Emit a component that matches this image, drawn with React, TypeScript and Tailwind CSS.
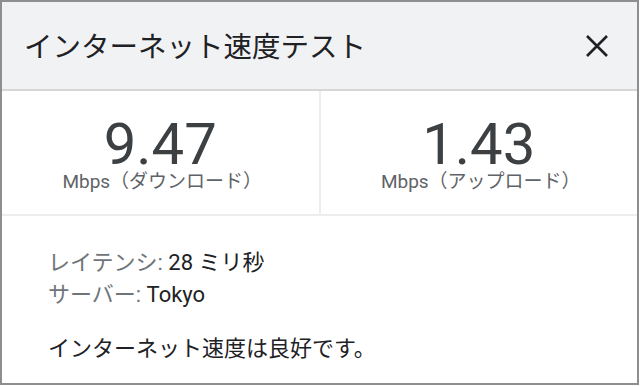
import React from 'react';

const stats = [
  { value: '9.47', label: 'Mbps（ダウンロード）' },
  { value: '1.43', label: 'Mbps（アップロード）' },
];

const CloseIcon = () => (
  <svg width="24" height="24" viewBox="0 0 24 24" className="text-[#202124]">
    <path d="M2 2 L22 22 M22 2 L2 22" stroke="currentColor" strokeWidth="2.6" fill="none" />
  </svg>
);

const App = () => {
  return (
    <div className="w-[642px] h-[386px] bg-white font-[Roboto,'Noto_Sans_CJK_JP',sans-serif]">
      <div className="w-[639px] h-[385px] border-2 border-[#8e8e8e] flex flex-col">
        <div className="h-[89px] bg-[#f1f2f4] border-b-2 border-[#d5d6d8] flex items-center justify-between pl-[22px] pr-[28px]">
          <h1 className="text-[28.5px] leading-[32px] text-[#202124] mt-[4px]">インターネット速度テスト</h1>
          <CloseIcon />
        </div>

        <div className="h-[125px] border-b-2 border-[#ededed] flex">
          {stats.map((s, i) => (
            <div
              key={i}
              className={`flex-1 flex flex-col items-center pt-[31px] ${i === 0 ? 'border-r-2 border-[#ededed]' : ''}`}
            >
              <div className="text-[58px] leading-[44px] text-[#3c4043]">{s.value}</div>
              <div className="text-[19px] leading-[22px] text-[#5f6368] mt-[5px] pl-[4px]">{s.label}</div>
            </div>
          ))}
        </div>

        <div className="flex-1 pt-[31px] pl-[46px] text-[22px] leading-[32px] text-[#202124]">
          <div>
            <span className="text-[#70757a]">レイテンシ: </span>28 ミリ秒
          </div>
          <div>
            <span className="text-[#70757a]">サーバー: </span>Tokyo
          </div>
          <div className="mt-[22px]">インターネット速度は良好です。</div>
        </div>
      </div>
    </div>
  );
};

export default App;
